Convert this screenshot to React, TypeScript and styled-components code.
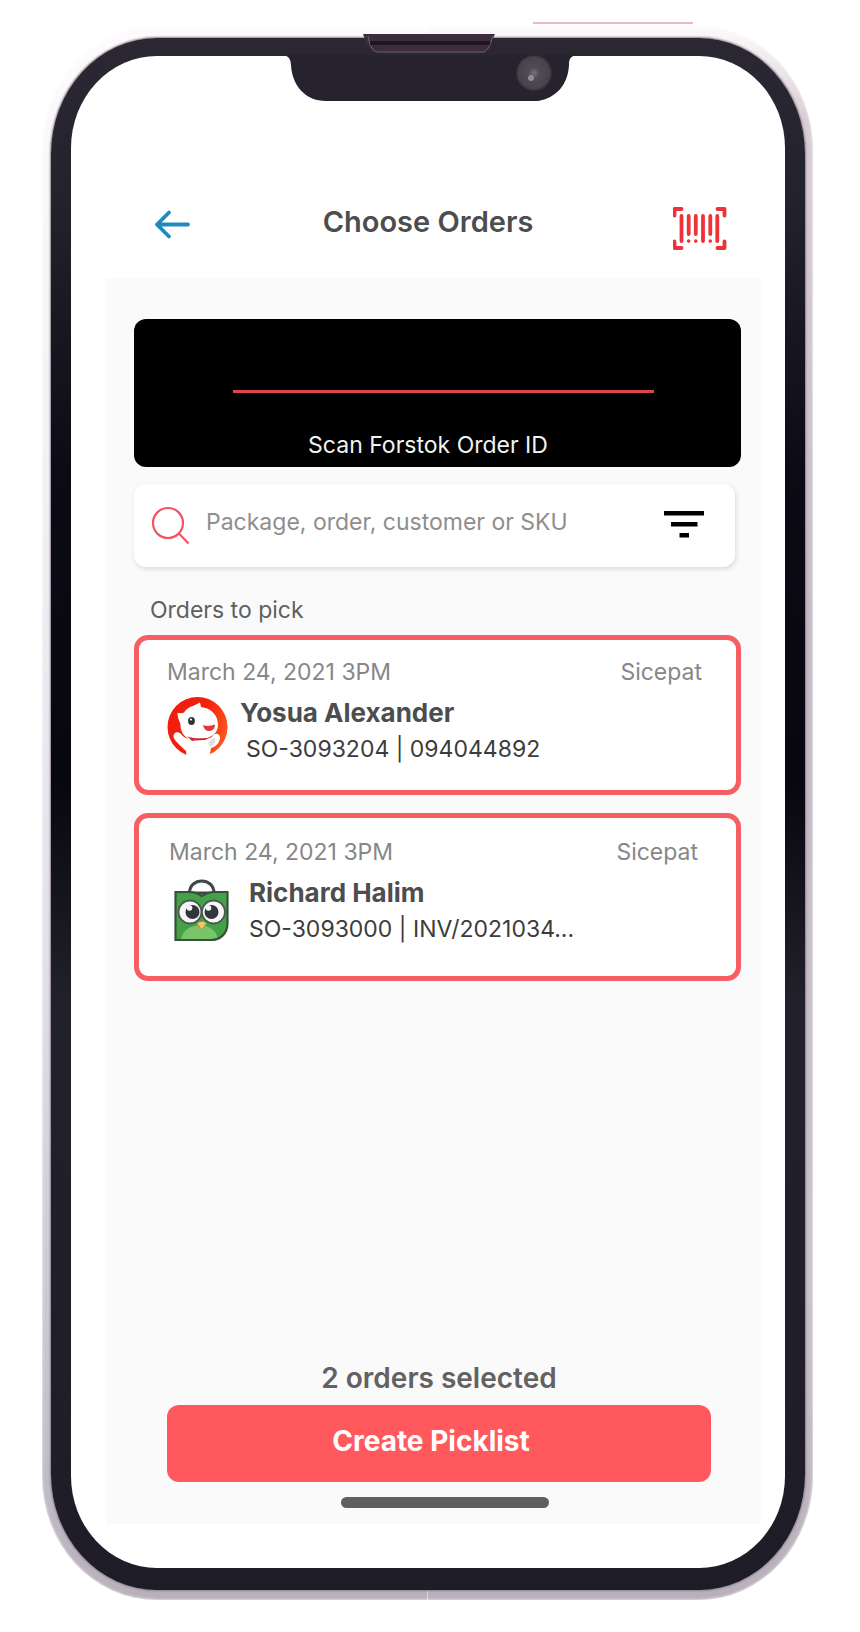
import React from "react";
import styled, { createGlobalStyle, css } from "styled-components";

const GlobalStyle = createGlobalStyle`
  *, *::before, *::after { box-sizing: border-box; }
  body {
    margin: 0;
    background: #fff;
    color: #4d4d4d;
    font-family: Inter, "Liberation Sans", sans-serif;
    font-size: 23px;
    line-height: 30px;
  }
  h1, h2, p { margin: 0; font: inherit; }
  svg { display: block; flex: none; }
`;

/* ---------- device ---------- */

const Page = styled.div`
  position: relative;
  display: flex;
  min-height: 100vh;
  padding: 26px 47px 32px 42px;
`;

const Glint = styled.span`
  position: absolute;
  top: 22px;
  left: 62%;
  width: 160px;
  height: 2px;
  background: #eab6cd;
`;

const Metal = styled.div`
  display: flex;
  flex: 1;
  min-width: 0;
  padding: 12px 8px 10px 9px;
  border-radius: 114px / 124px;
  background:
    linear-gradient(to bottom, #fdfbfc 0%, #f3eff5 30%, #e4dee6 60%, #c3c2cc 88%, #b9b0bb 100%) left / 50% 100% no-repeat,
    linear-gradient(to bottom, #fdfbfc 0%, #d9cdd6 6%, #c4bac6 40%, #c8c1ca 80%, #b9b0bb 100%) right / 50% 100% no-repeat;
  box-shadow: inset 0 0 3px #fff;
`;

const Bezel = styled.div`
  position: relative;
  display: flex;
  flex: 1;
  min-width: 0;
  padding: 18px 20px 22px;
  border-radius: 106px / 116px;
  background: linear-gradient(to bottom, #2b2833 0%, #24222d 10%, #0c0a14 28%, #08060f 48%, #22212b 62%, #1d1c27 100%);
  box-shadow: 0 0 2px 1px #8b828c;
`;

const Screen = styled.main`
  display: flex;
  flex: 1;
  flex-direction: column;
  min-width: 0;
  border-radius: 86px / 92px;
  background: #fff;
`;

const NotchDrawing = styled.svg`
  position: absolute;
  top: 0;
  left: 50%;
  transform: translateX(-50%);
  overflow: visible;
`;

/* ---------- header ---------- */

const Header = styled.header`
  display: grid;
  grid-template-columns: 1fr auto 1fr;
  align-items: start;
  height: 222px;
  padding: 148px 58px 0;
`;

const Title = styled.h1`
  font-size: 29px;
  font-weight: 600;
  line-height: 36px;
`;

const IconButton = styled.button`
  padding: 0;
  border: 0;
  background: none;
  cursor: pointer;
`;

const BackButton = styled(IconButton)`
  justify-self: start;
  padding-left: 24px;
`;

const ScanButton = styled(IconButton)`
  justify-self: end;
`;

/* ---------- content ---------- */

const Panel = styled.div`
  display: flex;
  flex: 1;
  flex-direction: column;
  margin: 0 24px 44px 35px;
  padding: 41px 20px 16px 28px;
  background: #fafafa;
`;

const Scanner = styled.section`
  display: flex;
  flex-direction: column;
  padding: 71px 0 7px;
  border-radius: 12px;
  background: #000;
  color: #f2f2f2;
`;

const ScanLine = styled.div`
  height: 3px;
  margin: 0 87px 0 99px;
  background: #d9474d;
`;

const ScanLabel = styled.p`
  margin-top: 37px;
  padding-right: 19px;
  text-align: center;
`;

const SearchBar = styled.form`
  display: flex;
  align-items: center;
  gap: 16px;
  height: 83px;
  margin: 17px 6px 28px 0;
  padding: 0 31px 0 16px;
  border-radius: 12px;
  background: #fff;
  box-shadow: 1px 2px 5px rgba(0, 0, 0, 0.13);
`;

const SearchInput = styled.input`
  flex: 1;
  min-width: 0;
  padding: 0 0 8px;
  border: 0;
  outline: 0;
  background: none;
  color: #4d4d4d;
  font: inherit;

  &::placeholder {
    color: #8e8e8e;
    opacity: 1;
  }
`;

const SectionLabel = styled.h2`
  padding-left: 16px;
  color: #5f5f5f;
`;

const OrderList = styled.div`
  display: flex;
  flex-direction: column;
  gap: 18px;
  margin-top: 10px;
`;

const OrderCard = styled.article<{ $roomy: boolean }>`
  padding: 17px 34px 24px 28px;
  border: 5px solid #f65e63;
  border-radius: 14px;
  background: #fff;
  ${({ $roomy }) => $roomy && css`padding: 19px 38px 30px 30px;`}
`;

const OrderMeta = styled.div`
  display: flex;
  justify-content: space-between;
  color: #878787;
`;

const OrderBody = styled.div<{ $roomy: boolean }>`
  display: flex;
  gap: ${({ $roomy }) => ($roomy ? 18 : 11)}px;
  margin-top: 7px;
`;

const OrderText = styled.div`
  flex: 1;
  min-width: 0;
`;

const Customer = styled.p`
  font-size: 26px;
  font-weight: 700;
  line-height: 38px;
`;

const OrderNumber = styled.p<{ $indent: boolean }>`
  padding-left: ${({ $indent }) => ($indent ? 6 : 0)}px;
  color: #3c3c3c;
  line-height: 34px;
`;

/* ---------- footer ---------- */

const Footer = styled.footer`
  display: flex;
  flex-direction: column;
  margin-top: auto;
  padding: 40px 30px 0 33px;
`;

const Selected = styled.p`
  color: #626262;
  font-size: 28px;
  font-weight: 600;
  line-height: 36px;
  text-align: center;
`;

const CreateButton = styled.button`
  height: 77px;
  margin-top: 9px;
  padding: 0 16px 6px 0;
  border: 0;
  border-radius: 12px;
  background: #ff595d;
  color: #fff;
  font: 700 28px/36px Inter, "Liberation Sans", sans-serif;
  cursor: pointer;
`;

const HomeBar = styled.div`
  align-self: center;
  width: 208px;
  height: 11px;
  margin: 15px 0 0 12px;
  border-radius: 6px;
  background: #5f5f5f;
`;

/* ---------- drawings ---------- */

function Notch() {
  return (
    <NotchDrawing width="300" height="66" viewBox="0 0 300 66" aria-hidden="true">
      <defs>
        <radialGradient id="lens">
          <stop offset="0" stopColor="#77737c" />
          <stop offset="0.3" stopColor="#504c54" />
          <stop offset="0.85" stopColor="#47434b" />
          <stop offset="1" stopColor="#26232d" />
        </radialGradient>
      </defs>
      <path d="M6 17 C12 19 12.500 22 13 27 C14 47 27 63 48 63 H260 C278 60 290 47 291 27 C291 21 292 19 298 17 Z" fill="#26232e" />
      <path d="M85 -4 H217 C214 2 213 9 206 14 H98 C89 12 88 3 85 -4 Z" fill="#3d2c3e" />
      <path d="M90 -2 C92 9 95 14 100 14 H206 C212 11 213 3 215 -2" fill="none" stroke="#6d6269" strokeWidth="1" />
      <path d="M92 5 H212" stroke="#1f1823" strokeWidth="4" />
      <circle cx="256" cy="35" r="18.500" fill="url(#lens)" />
      <circle cx="253" cy="40" r="3" fill="#aaa6ad" opacity="0.7" />
    </NotchDrawing>
  );
}

function BackArrow() {
  return (
    <svg width="40" height="40" viewBox="0 0 40 40" fill="none" stroke="#2089bf" strokeWidth="3.800" strokeLinecap="round" strokeLinejoin="round" aria-hidden="true">
      <path d="M35 20.500H4M16 8.500L4 20.500L16 32.500" />
    </svg>
  );
}

function Barcode() {
  return (
    <svg width="54" height="48" viewBox="0 0 54 48" fill="none" stroke="#ee3338" strokeWidth="3.800" strokeLinecap="round" strokeLinejoin="round" aria-hidden="true">
      <path d="M8.500 5H1.500V11.500M44.500 5H51.500V11.500M8.500 44H1.500V37.500M44.500 44H51.500V37.500" />
      <path d="M8.500 12V37M30 12V37M44.300 12V37M15.700 12V30M22.800 12V30M37.300 12V30" strokeWidth="3.800" />
      <path d="M15.700 37V37.100M22.800 37V37.100M37.300 37V37.100" strokeWidth="3.600" />
    </svg>
  );
}

function SearchIcon() {
  return (
    <svg width="40" height="40" viewBox="0 0 40 40" fill="none" stroke="#ee5565" strokeWidth="2.200" aria-hidden="true">
      <circle cx="18" cy="17" r="15" />
      <path d="M28.500 27L38.500 37.500" />
    </svg>
  );
}

function FilterIcon() {
  return (
    <svg width="40" height="30" viewBox="0 0 40 30" aria-hidden="true">
      <path d="M0 0H40V4.500H0ZM7 11H33.500V15.500H7ZM15.500 22H25V26.500H15.500Z" fill="#000" />
    </svg>
  );
}

function MascotLogo() {
  return (
    <svg width="62" height="68" viewBox="0 0 62 68" aria-hidden="true">
      <defs>
        <linearGradient id="disc" x1="0" y1="0.300" x2="1" y2="0.700">
          <stop offset="0" stopColor="#ee1d0e" />
          <stop offset="0.5" stopColor="#f3200f" />
          <stop offset="1" stopColor="#ff5a1e" />
        </linearGradient>
      </defs>
      <circle cx="30.500" cy="33" r="30" fill="url(#disc)" />
      <path d="M10.500 19C13 19 15 19.500 17 18.500C19 15 23 12.500 26 12L33 8.500L34 13C44 14 51 21 51 31C51 39 45 43 37 45L22 45C16 42 13 36 13.500 30C11.500 26 10.500 22 10.500 19Z" fill="#fff" />
      <path d="M7 40C9 37 13 38 15 41C18 45 21 44 24 45.500L38 46L45 43C47 38.500 52 39 53 43C53 48 50 52 44 54L42 66H20L19 57C15 53 11 50 8 46C6.500 44 6 42 7 40Z" fill="#fff" />
      <path d="M20 42C27 45.500 33 44 41 44C36 47.500 32 45.500 25 47Z" fill="#d9222a" />
      <path d="M41 48C44 47 46 45 47 43C50 47 47 51 43 53Z" fill="#e2dfe0" />
      <path d="M36 31C40 32.500 44 32 48 30.500C48 35 45 37 42 37C39 37 37 35 36 31Z" fill="#e9323a" />
      <ellipse cx="24.500" cy="27" rx="3.400" ry="4" fill="#2c333a" />
      <circle cx="24" cy="25.500" r="1.100" fill="#fff" />
    </svg>
  );
}

function OwlBagLogo() {
  return (
    <svg width="62" height="68" viewBox="0 0 62 68" aria-hidden="true">
      <path d="M20.500 19C20.500 3 45 3 45 19Z" fill="#fff" stroke="#40494a" strokeWidth="3" />
      <path d="M6.500 18H20C26 18 30 20 32.700 22C36 20 40 18 46 18H58.500V49C58.500 60 51 66 42 66H6.500Z" fill="#43a243" />
      <path d="M12 66C14 47 46 46 49 65C47 66 44 66 42 66Z" fill="#79c469" />
      <path d="M6.500 18H20C26 18 30 20 32.700 22C36 20 40 18 46 18H58.500V49C58.500 60 51 66 42 66H6.500Z" fill="none" stroke="#37503f" strokeWidth="2.200" />
      <circle cx="21" cy="38" r="11.500" fill="#f5f5f5" stroke="#4a5a52" strokeWidth="1.800" />
      <circle cx="44.500" cy="38" r="11.500" fill="#f5f5f5" stroke="#4a5a52" strokeWidth="1.800" />
      <circle cx="23.500" cy="38" r="7" fill="#30363a" />
      <circle cx="42.500" cy="38" r="7" fill="#30363a" />
      <circle cx="20.500" cy="34" r="2.800" fill="#f5f5f5" />
      <circle cx="39.500" cy="34" r="2.800" fill="#f5f5f5" />
      <path d="M28 49.500C31 46.500 34.500 46.500 37.500 49.500L32.700 56Z" fill="#f2c46a" stroke="#8f8a4a" strokeWidth="0.800" />
    </svg>
  );
}

/* ---------- page ---------- */

interface Order {
  placed: string;
  courier: string;
  customer: string;
  number: string;
  logo: React.ReactNode;
  roomy: boolean;
}

const orders: Order[] = [
  {
    placed: "March 24, 2021 3PM",
    courier: "Sicepat",
    customer: "Yosua Alexander",
    number: "SO-3093204 | 094044892",
    logo: <MascotLogo />,
    roomy: false,
  },
  {
    placed: "March 24, 2021 3PM",
    courier: "Sicepat",
    customer: "Richard Halim",
    number: "SO-3093000 | INV/2021034...",
    logo: <OwlBagLogo />,
    roomy: true,
  },
];

export default function App() {
  return (
    <>
      <GlobalStyle />
      <Page>
        <Glint />
        <Metal>
          <Bezel>
            <Notch />
            <Screen>
              <Header>
                <BackButton type="button" aria-label="Back">
                  <BackArrow />
                </BackButton>
                <Title>Choose Orders</Title>
                <ScanButton type="button" aria-label="Scan barcode">
                  <Barcode />
                </ScanButton>
              </Header>
              <Panel>
                <Scanner>
                  <ScanLine />
                  <ScanLabel>Scan Forstok Order ID</ScanLabel>
                </Scanner>
                <SearchBar role="search">
                  <SearchIcon />
                  <SearchInput
                    type="text"
                    aria-label="Search orders"
                    placeholder="Package, order, customer or SKU"
                  />
                  <IconButton type="button" aria-label="Filter">
                    <FilterIcon />
                  </IconButton>
                </SearchBar>
                <SectionLabel>Orders to pick</SectionLabel>
                <OrderList>
                  {orders.map((order) => (
                    <OrderCard key={order.number} $roomy={order.roomy}>
                      <OrderMeta>
                        <span>{order.placed}</span>
                        <span>{order.courier}</span>
                      </OrderMeta>
                      <OrderBody $roomy={order.roomy}>
                        {order.logo}
                        <OrderText>
                          <Customer>{order.customer}</Customer>
                          <OrderNumber $indent={!order.roomy}>{order.number}</OrderNumber>
                        </OrderText>
                      </OrderBody>
                    </OrderCard>
                  ))}
                </OrderList>
                <Footer>
                  <Selected>2 orders selected</Selected>
                  <CreateButton type="button">Create Picklist</CreateButton>
                  <HomeBar />
                </Footer>
              </Panel>
            </Screen>
          </Bezel>
        </Metal>
      </Page>
    </>
  );
}
